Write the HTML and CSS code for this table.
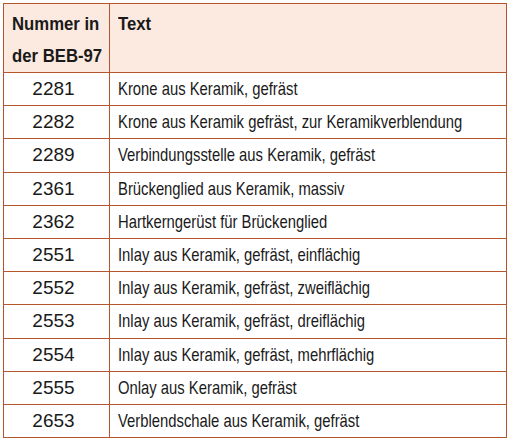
FILE: index.html
```html
<!DOCTYPE html>
<html lang="de">
<head>
<meta charset="utf-8">
<title>BEB-97</title>
<link rel="stylesheet" href="styles.css">
</head>
<body>
<table class="beb">
  <thead>
    <tr class="head">
      <th class="num-h"><span class="hs">Nummer in<br>der BEB-97</span></th>
      <th class="txt-h"><span class="hs">Text</span></th>
    </tr>
  </thead>
  <tbody>
    <tr><td class="num">2281</td><td class="txt"><span class="ts">Krone aus Keramik, gefräst</span></td></tr>
    <tr><td class="num">2282</td><td class="txt"><span class="ts">Krone aus Keramik gefräst, zur Keramikverblendung</span></td></tr>
    <tr><td class="num">2289</td><td class="txt"><span class="ts">Verbindungsstelle aus Keramik, gefräst</span></td></tr>
    <tr><td class="num">2361</td><td class="txt"><span class="ts">Brückenglied aus Keramik, massiv</span></td></tr>
    <tr><td class="num">2362</td><td class="txt"><span class="ts">Hartkerngerüst für Brückenglied</span></td></tr>
    <tr><td class="num">2551</td><td class="txt"><span class="ts">Inlay aus Keramik, gefräst, einflächig</span></td></tr>
    <tr><td class="num">2552</td><td class="txt"><span class="ts">Inlay aus Keramik, gefräst, zweiflächig</span></td></tr>
    <tr><td class="num">2553</td><td class="txt"><span class="ts">Inlay aus Keramik, gefräst, dreiflächig</span></td></tr>
    <tr><td class="num">2554</td><td class="txt"><span class="ts">Inlay aus Keramik, gefräst, mehrflächig</span></td></tr>
    <tr><td class="num">2555</td><td class="txt"><span class="ts">Onlay aus Keramik, gefräst</span></td></tr>
    <tr><td class="num">2653</td><td class="txt"><span class="ts">Verblendschale aus Keramik, gefräst</span></td></tr>
  </tbody>
</table>
</body>
</html>
```
FILE: styles.css
```css
html, body {
  margin: 0;
  padding: 0;
  background: #ffffff;
}
body {
  padding: 3px 0 0 3px;
  font-family: "Liberation Sans", Arial, sans-serif;
  color: #1a1a1a;
}
.beb {
  border-collapse: collapse;
  width: 504px;
  table-layout: fixed;
  font-size: 19px;
}
.beb th,
.beb td {
  border: 1.5px solid #b5552e;
  padding: 0;
  white-space: nowrap;
  overflow: hidden;
}
.beb .head {
  background: #fce9df;
}
.beb .head th {
  height: 68px;
  box-sizing: border-box;
  text-align: left;
  vertical-align: top;
  font-weight: bold;
  line-height: 32px;
  padding: 4px 8px 0 8px;
}
.beb .hs {
  display: inline-block;
  transform: scaleX(0.88);
  transform-origin: left center;
}
.beb .num-h {
  width: 106px;
}
.beb tbody td {
  height: 33.2px;
  box-sizing: border-box;
  line-height: 22px;
}
.beb td.num {
  text-align: center;
  vertical-align: middle;
  padding-right: 6px;
}
.beb td.txt {
  text-align: left;
  vertical-align: middle;
  padding-left: 8px;
}
.beb .ts {
  display: inline-block;
  transform: scaleX(0.78);
  transform-origin: left center;
}
```
